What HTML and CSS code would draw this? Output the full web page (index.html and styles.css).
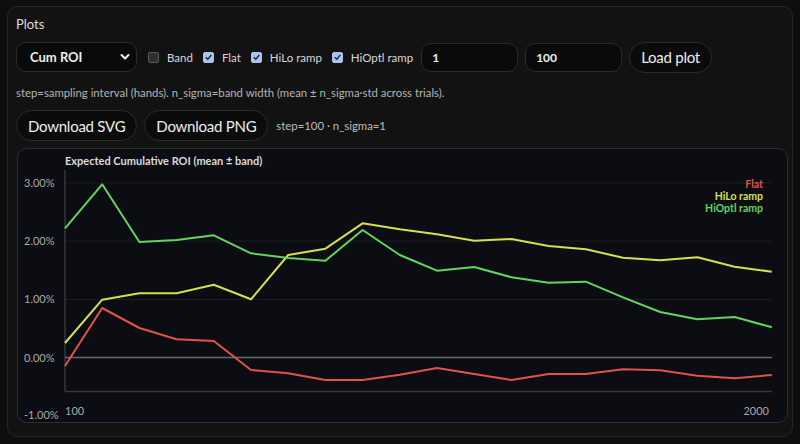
FILE: index.html
```html
<!DOCTYPE html>
<html lang="en">
<head>
  <meta charset="UTF-8">
  <title>Plots</title>
  <link rel="stylesheet" href="styles.css">
</head>
<body>
  <div class="panel">
    <div class="panel-title">Plots</div>

    <div class="controls">
      <div class="select">
        <span>Cum ROI</span>
        <svg class="chev" width="10" height="8" viewBox="0 0 10 8"><path d="M1.5 2 L5 5.5 L8.5 2" fill="none" stroke="#eee" stroke-width="2" stroke-linecap="round" stroke-linejoin="round"/></svg>
      </div>
      <label class="check"><span class="box"></span>Band</label>
      <label class="check"><span class="box on"><svg width="10" height="10" viewBox="0 0 10 10"><path d="M2 5.2 L4.2 7.4 L8.2 2.6" fill="none" stroke="#1b2533" stroke-width="1.5"/></svg></span>Flat</label>
      <label class="check"><span class="box on"><svg width="10" height="10" viewBox="0 0 10 10"><path d="M2 5.2 L4.2 7.4 L8.2 2.6" fill="none" stroke="#1b2533" stroke-width="1.5"/></svg></span>HiLo ramp</label>
      <label class="check"><span class="box on"><svg width="10" height="10" viewBox="0 0 10 10"><path d="M2 5.2 L4.2 7.4 L8.2 2.6" fill="none" stroke="#1b2533" stroke-width="1.5"/></svg></span>HiOptl ramp</label>
      <div class="field first">1</div>
      <div class="field">100</div>
      <button class="btn">Load plot</button>
    </div>

    <div class="hint">step=sampling interval (hands). n_sigma=band width (mean ± n_sigma·std across trials).</div>

    <div class="actions">
      <button class="btn">Download SVG</button>
      <button class="btn">Download PNG</button>
      <span class="meta">step=100 · n_sigma=1</span>
    </div>

    <div class="chart">
      <svg width="769" height="273" viewBox="18 149 769 273">
        <g class="grid">
          <line x1="65" y1="183" x2="772" y2="183"/>
          <line x1="65" y1="241" x2="772" y2="241"/>
          <line x1="65" y1="299.5" x2="772" y2="299.5"/>
        </g>
        <line class="axis" x1="65" y1="170" x2="65" y2="391.5"/>
        <line class="axis" x1="65" y1="391.5" x2="772" y2="391.5"/>
        <line class="zero" x1="65" y1="357.5" x2="772" y2="357.5"/>

        <text class="title" x="65" y="165">Expected Cumulative ROI (mean ± band)</text>

        <g class="ylab">
          <text x="24" y="187">3.00%</text>
          <text x="24" y="245">2.00%</text>
          <text x="24" y="303">1.00%</text>
          <text x="24" y="361.5">0.00%</text>
          <text x="24" y="419">-1.00%</text>
        </g>
        <text class="xlab" x="65" y="415">100</text>
        <text class="xlab" x="769" y="415" text-anchor="end">2000</text>

        <polyline class="s-flat" points="65,366 102.2,308 139.4,328 176.6,339.3 213.8,341 251,370 288.2,373.3 325.4,380 362.6,380 399.8,374.7 437,368 474.2,374 511.4,380 548.6,374 585.8,374 623,369.3 660.2,370.3 697.4,375.7 734.6,378.3 771.8,375"/>
        <polyline class="s-hilo" points="65,343 102.2,299.7 139.4,293.3 176.6,293.3 213.8,284.7 251,299.3 288.2,255 325.4,248.7 362.6,223.3 399.8,229.3 437,234.3 474.2,240.7 511.4,239 548.6,246 585.8,249.3 623,257.7 660.2,260.3 697.4,257.3 734.6,266.7 771.8,271.7"/>
        <polyline class="s-hiopt" points="65,228.3 102.2,184.3 139.4,242 176.6,240 213.8,235.3 251,253.3 288.2,258 325.4,260.7 362.6,230 399.8,255 437,270.7 474.2,267 511.4,277.3 548.6,282.7 585.8,281.7 623,297.3 660.2,312 697.4,319.3 734.6,317 771.8,327.3"/>

        <g class="legend">
          <text class="l-flat" x="763" y="187.5">Flat</text>
          <text class="l-hilo" x="763" y="199.5">HiLo ramp</text>
          <text class="l-hiopt" x="763" y="211.5">HiOptl ramp</text>
        </g>
      </svg>
    </div>
  </div>
</body>
</html>
```

FILE: styles.css
```css
body { margin: 0; padding: 6px 7px 7px 7px; background: #0e0e0e; color: #e6e6e6; font-family: 'Lato', 'Open Sans', sans-serif; }
.panel { border: 1px solid #262626; border-radius: 10px; background: #121212; padding: 7px 4px 13px 8px; }
.panel-title { font-size: 13px; color: #dedede; height: 20px; line-height: 20px; }

.controls { display: flex; align-items: center; margin-top: 8px; height: 30px; }
.select { width: 121px; height: 30px; box-sizing: border-box; border: 1px solid #2b2b2b; border-radius: 10px; background: #0a0a0a; display: flex; align-items: center; justify-content: space-between; padding: 0 6px 0 13px; font-size: 13px; font-weight: 700; color: #eee; }
.chev { display: block; }
.check { display: flex; align-items: center; font-size: 11.5px; color: #d6d6d6; margin-left: 11px; }
.check + .check { margin-left: 10px; }
.box { width: 11px; height: 11px; box-sizing: border-box; border: 1px solid #5a5a5a; border-radius: 2px; background: #2e2e2e; margin-right: 8px; display: flex; align-items: center; justify-content: center; }
.box.on { background: #a9c4ec; border-color: #a9c4ec; }
.box svg { display: block; }
.field { width: 97px; height: 29px; box-sizing: border-box; border: 1px solid #2b2b2b; border-radius: 10px; background: #0a0a0a; padding: 0 10px; line-height: 27px; font-size: 12px; font-weight: 700; color: #eee; margin-left: 7px; }
.field.first { margin-left: 8px; }
.btn { height: 31px; box-sizing: border-box; border: 1px solid #2b2b2b; border-radius: 16px; background: #0b0b0b; color: #eee; font-family: inherit; font-size: 15px; letter-spacing: -0.25px; padding: 0 11px; margin: 0; }
.controls .btn { margin-left: 7px; }

.hint { font-size: 11.35px; color: #b4b4b4; margin-top: 13px; height: 16px; line-height: 16px; }

.actions { display: flex; align-items: center; gap: 7px; margin-top: 9px; }
.meta { font-size: 11.35px; color: #bdbdbd; margin-left: 1px; }

.chart { margin-top: 7px; margin-left: 1px; border: 1px solid #2a2d33; border-radius: 10px; background: #0b0d12; height: 273px; overflow: hidden; }
.chart svg { display: block; }
.grid line { stroke: #1a1d24; stroke-width: 1; }
.axis { stroke: #34373d; stroke-width: 1.5; }
.zero { stroke: #65676b; stroke-width: 1.5; }
.title { font-size: 11px; font-weight: 700; fill: #dcdcdc; }
.ylab text { font-size: 11px; fill: #a9a9a9; }
.xlab { font-size: 11px; fill: #a9a9a9; }
polyline { fill: none; stroke-width: 2; stroke-linejoin: round; }
.s-flat { stroke: #e0524b; }
.s-hilo { stroke: #d4e04c; }
.s-hiopt { stroke: #5fd65c; }
.legend text { font-size: 10.5px; font-weight: 700; text-anchor: end; }
.l-flat { fill: #e0524b; }
.l-hilo { fill: #d4e04c; }
.l-hiopt { fill: #5fd65c; }
```
